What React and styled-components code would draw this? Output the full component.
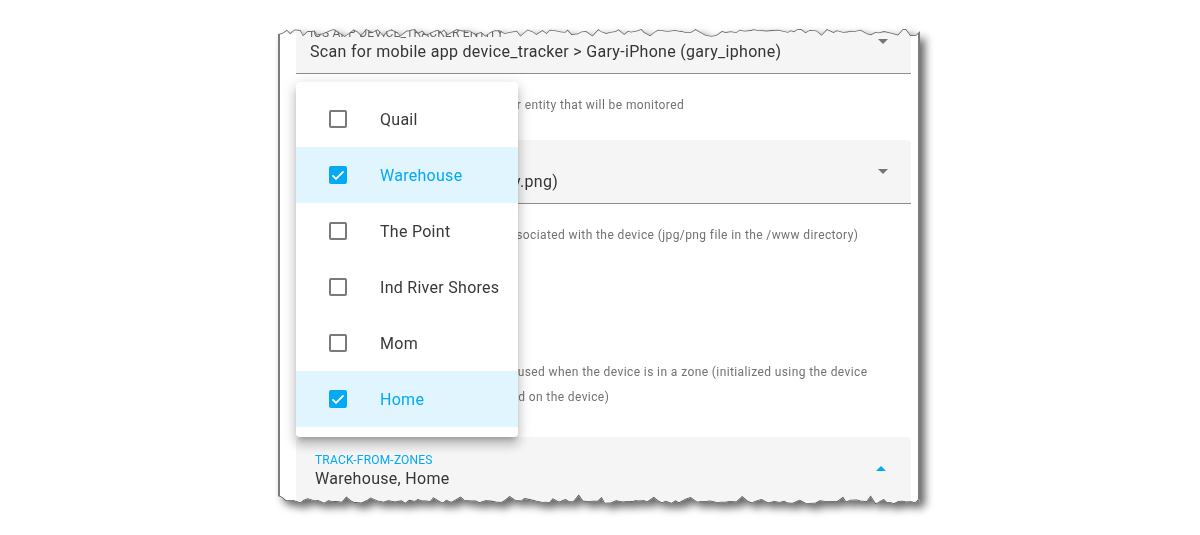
import React, { useMemo } from "react";
import styled, { createGlobalStyle } from "styled-components";

const GlobalStyle = createGlobalStyle`
  html, body {
    margin: 0;
    padding: 0;
    background: #ffffff;
  }
  body {
    font-family: Roboto, "Noto Sans", Arial, sans-serif;
    -webkit-font-smoothing: antialiased;
  }
`;

const CARD_W = 642;
const CARD_H = 477;
const PRIMARY = "#03a9f4";

const zones = [
  { name: "Quail", checked: false },
  { name: "Warehouse", checked: true },
  { name: "The Point", checked: false },
  { name: "Ind River Shores", checked: false },
  { name: "Mom", checked: false },
  { name: "Home", checked: true },
];

// little seeded random so the torn edge is the same on every render
const seeded = (seed) => {
  let s = seed;
  return () => {
    s = (s * 9301 + 49297) % 233280;
    return s / 233280;
  };
};

const tornEdge = (seed, base, dir) => {
  const r = seeded(seed);
  const pts = [];
  let x = 0;
  while (x < CARD_W) {
    const spike = r() > 0.82 ? 2.5 + r() * 2.5 : 0;
    pts.push([x, base + dir * (1 + r() * 3.5 + spike)]);
    x += 2.5 + r() * 4.5;
  }
  pts.push([CARD_W, base + dir * (1 + r() * 3)]);
  return pts;
};

const Page = styled.div`
  width: 1200px;
  height: 535px;
  box-sizing: border-box;
  padding-top: 28px;
  display: flex;
  justify-content: center;
  align-items: flex-start;
`;

const ShadowWrap = styled.div`
  filter: drop-shadow(5px 5px 4px rgba(0, 0, 0, 0.6));
  margin-left: -2px;
`;

const Card = styled.div`
  position: relative;
  width: ${CARD_W}px;
  height: ${CARD_H}px;
  box-sizing: border-box;
  background: #ffffff;
  border-left: 2px solid #7c7c7c;
  border-right: 2px solid #7c7c7c;
  overflow: hidden;
`;

const EdgeLines = styled.svg`
  position: absolute;
  left: -2px;
  top: 0;
  pointer-events: none;
`;

const Content = styled.div`
  display: flex;
  flex-direction: column;
  padding: 0 7px 0 16px;
  margin-top: -18px;
`;

const Field = styled.div`
  display: flex;
  height: 64px;
  box-sizing: border-box;
  background: #f5f5f5;
  border-radius: 4px 4px 0 0;
  border-bottom: 1px solid ${(p) => (p.$open ? "transparent" : "rgba(0, 0, 0, 0.42)")};
  padding-left: ${(p) => p.$pad}px;
  margin-top: ${(p) => p.$gap || 0}px;
`;

const FieldText = styled.div`
  flex: 1;
  display: flex;
  flex-direction: column;
  gap: 2px;
  padding-top: 16px;
  min-width: 0;
`;

const FieldLabel = styled.div`
  font-size: 12px;
  line-height: 14px;
  letter-spacing: 0.2px;
  text-transform: uppercase;
  color: ${(p) => (p.$active ? PRIMARY : "rgba(0, 0, 0, 0.6)")};
  white-space: nowrap;
`;

const FieldValue = styled.div`
  font-size: 16px;
  line-height: 20px;
  letter-spacing: 0.3px;
  color: #353535;
  white-space: nowrap;
`;

const Arrow = styled.span`
  align-self: center;
  width: 0;
  height: 0;
  margin-right: ${(p) => p.$right}px;
  border-left: 5px solid transparent;
  border-right: 5px solid transparent;
  ${(p) =>
    p.$up
      ? `border-bottom: 5px solid ${PRIMARY}; margin-top: 0px;`
      : `border-top: 5px solid #757575; margin-top: -1px;`}
`;

const Helper = styled.div`
  padding-left: 16px;
  margin-top: ${(p) => p.$gap}px;
  font-size: 12px;
  line-height: ${(p) => p.$lh || 20}px;
  letter-spacing: 0.4px;
  color: #727272;
  white-space: nowrap;
`;

const Line = styled.span`
  display: block;
`;

const Menu = styled.div`
  position: absolute;
  left: 16px;
  top: 54px;
  width: 222px;
  padding: 9px 0 10px;
  background: #ffffff;
  border-radius: 4px;
  box-shadow: 0 5px 5px -3px rgba(0, 0, 0, 0.2), 0 8px 10px 1px rgba(0, 0, 0, 0.14),
    0 3px 14px 2px rgba(0, 0, 0, 0.12);
`;

const Item = styled.div`
  display: flex;
  align-items: center;
  height: 56px;
  padding-left: 33px;
  gap: 33px;
  background: ${(p) => (p.$checked ? "#e1f5fe" : "transparent")};
`;

const Box = styled.span`
  display: flex;
  align-items: center;
  justify-content: center;
  width: 18px;
  height: 18px;
  box-sizing: border-box;
  border-radius: 2px;
  border: 2px solid ${(p) => (p.$checked ? PRIMARY : "#7a7a7a")};
  background: ${(p) => (p.$checked ? PRIMARY : "transparent")};
`;

const ItemText = styled.span`
  margin-top: 2px;
  font-size: 16px;
  line-height: 20px;
  letter-spacing: 0.28px;
  color: ${(p) => (p.$checked ? PRIMARY : "#383838")};
  white-space: nowrap;
`;

const CheckMark = () => (
  <svg width="16" height="16" viewBox="0 0 24 24">
    <path d="M2.5 12.5 L8.6 18.6 L21.5 5.7" fill="none" stroke="#ffffff" strokeWidth="3.2" />
  </svg>
);

export default function App() {
  const edges = useMemo(() => {
    const top = tornEdge(17, 0, 1);
    const bottom = tornEdge(91, CARD_H, -1);
    const poly = [...top, ...bottom.slice().reverse()]
      .map(([x, y]) => `${x.toFixed(1)}px ${y.toFixed(1)}px`)
      .join(", ");
    const line = (pts) => pts.map(([x, y]) => `${x.toFixed(1)},${y.toFixed(1)}`).join(" ");
    return { clip: `polygon(${poly})`, top: line(top), bottom: line(bottom) };
  }, []);

  return (
    <>
      <GlobalStyle />
      <Page>
        <ShadowWrap>
          <Card style={{ clipPath: edges.clip }}>
            <Content>
              <Field $pad={14}>
                <FieldText>
                  <FieldLabel>iOS App device_tracker entity</FieldLabel>
                  <FieldValue>Scan for mobile app device_tracker &gt; Gary-iPhone (gary_iphone)</FieldValue>
                </FieldText>
                <Arrow $right={23} />
              </Field>
              <Helper $gap={21}>Select the mobile app device_tracker entity that will be monitored</Helper>

              <Field $pad={14} $gap={25}>
                <FieldText>
                  <FieldLabel>Picture</FieldLabel>
                  <FieldValue>gary.jpg (/local/images/gary.png)</FieldValue>
                </FieldText>
                <Arrow $right={23} />
              </Field>
              <Helper $gap={21}>The picture for the person that is associated with the device (jpg/png file in the /www directory)</Helper>

              <Helper $gap={115} $lh={25}>
                <Line>This interval between location polls used when the device is in a zone (initialized using the device</Line>
                <Line>tracker interval which was configured on the device)</Line>
              </Helper>

              <Field $pad={19} $gap={27} $open>
                <FieldText>
                  <FieldLabel $active>track-from-zones</FieldLabel>
                  <FieldValue>Warehouse, Home</FieldValue>
                </FieldText>
                <Arrow $up $right={25} />
              </Field>
            </Content>

            <Menu>
              {zones.map((z) => (
                <Item key={z.name} $checked={z.checked}>
                  <Box $checked={z.checked}>{z.checked && <CheckMark />}</Box>
                  <ItemText $checked={z.checked}>{z.name}</ItemText>
                </Item>
              ))}
            </Menu>

            <EdgeLines width={CARD_W} height={CARD_H} viewBox={`0 0 ${CARD_W} ${CARD_H}`}>
              <polyline points={edges.top} fill="none" stroke="#6a6a6a" strokeWidth="1.6" />
              <polyline points={edges.bottom} fill="none" stroke="#555555" strokeWidth="1.6" />
            </EdgeLines>
          </Card>
        </ShadowWrap>
      </Page>
    </>
  );
}
